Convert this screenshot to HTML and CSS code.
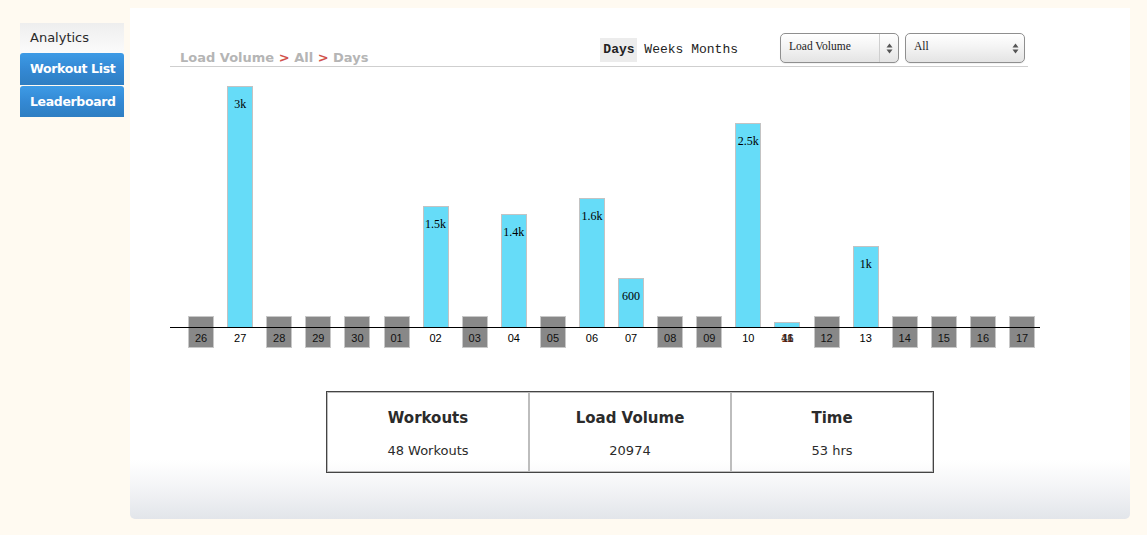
FILE: index.html
```html
<!DOCTYPE html>
<html>
<head>
<meta charset="utf-8">
<link rel="stylesheet" href="styles.css">
</head>
<body>
<div class="page">
  <nav class="sidebar">
    <a class="nav-item nav-active">Analytics</a>
    <a class="nav-item nav-blue">Workout List</a>
    <a class="nav-item nav-blue">Leaderboard</a>
  </nav>
  <main class="panel">
    <div class="header">
      <div class="crumbs">Load Volume <span class="sep">&gt;</span> All <span class="sep">&gt;</span> Days</div>
      <div class="periods"><span class="period period-on">Days</span> <span class="period">Weeks</span> <span class="period">Months</span></div>
      <div class="select select-metric"><span class="select-text">Load Volume</span><span class="select-arrow"><svg width="7" height="11" viewBox="0 0 7 11"><path d="M3.5 0.5 L6.5 4.5 H0.5 Z M3.5 10.5 L6.5 6.5 H0.5 Z" fill="#555"/></svg></span></div>
      <div class="select select-filter"><span class="select-text">All</span><span class="select-arrow"><svg width="7" height="11" viewBox="0 0 7 11"><path d="M3.5 0.5 L6.5 4.5 H0.5 Z M3.5 10.5 L6.5 6.5 H0.5 Z" fill="#555"/></svg></span></div>
    </div>

    <div class="chart">
      <div class="plot">
        <div class="slot"><div class="stub"></div></div>
        <div class="slot"><div class="bar" style="height:241px"><span class="val">3k</span></div></div>
        <div class="slot"><div class="stub"></div></div>
        <div class="slot"><div class="stub"></div></div>
        <div class="slot"><div class="stub"></div></div>
        <div class="slot"><div class="stub"></div></div>
        <div class="slot"><div class="bar" style="height:121px"><span class="val">1.5k</span></div></div>
        <div class="slot"><div class="stub"></div></div>
        <div class="slot"><div class="bar" style="height:113px"><span class="val">1.4k</span></div></div>
        <div class="slot"><div class="stub"></div></div>
        <div class="slot"><div class="bar" style="height:129px"><span class="val">1.6k</span></div></div>
        <div class="slot"><div class="bar" style="height:49px"><span class="val">600</span></div></div>
        <div class="slot"><div class="stub"></div></div>
        <div class="slot"><div class="stub"></div></div>
        <div class="slot"><div class="bar" style="height:204px"><span class="val">2.5k</span></div></div>
        <div class="slot"><div class="bar" style="height:5px"></div></div>
        <div class="slot"><div class="stub"></div></div>
        <div class="slot"><div class="bar" style="height:81px"><span class="val">1k</span></div></div>
        <div class="slot"><div class="stub"></div></div>
        <div class="slot"><div class="stub"></div></div>
        <div class="slot"><div class="stub"></div></div>
        <div class="slot"><div class="stub"></div></div>
      </div>
      <div class="axis"></div>
      <div class="labels">
        <div class="slot"><span class="day day-empty">26</span></div>
        <div class="slot"><span class="day">27</span></div>
        <div class="slot"><span class="day day-empty">28</span></div>
        <div class="slot"><span class="day day-empty">29</span></div>
        <div class="slot"><span class="day day-empty">30</span></div>
        <div class="slot"><span class="day day-empty">01</span></div>
        <div class="slot"><span class="day">02</span></div>
        <div class="slot"><span class="day day-empty">03</span></div>
        <div class="slot"><span class="day">04</span></div>
        <div class="slot"><span class="day day-empty">05</span></div>
        <div class="slot"><span class="day">06</span></div>
        <div class="slot"><span class="day">07</span></div>
        <div class="slot"><span class="day day-empty">08</span></div>
        <div class="slot"><span class="day day-empty">09</span></div>
        <div class="slot"><span class="day">10</span></div>
        <div class="slot"><span class="day day-overlap"><span class="ov-a">11</span><span class="ov-b">46</span></span></div>
        <div class="slot"><span class="day day-empty">12</span></div>
        <div class="slot"><span class="day">13</span></div>
        <div class="slot"><span class="day day-empty">14</span></div>
        <div class="slot"><span class="day day-empty">15</span></div>
        <div class="slot"><span class="day day-empty">16</span></div>
        <div class="slot"><span class="day day-empty">17</span></div>
      </div>
    </div>

    <div class="stats">
      <div class="stat">
        <div class="stat-title">Workouts</div>
        <div class="stat-value">48 Workouts</div>
      </div>
      <div class="stat">
        <div class="stat-title">Load Volume</div>
        <div class="stat-value">20974</div>
      </div>
      <div class="stat">
        <div class="stat-title">Time</div>
        <div class="stat-value">53 hrs</div>
      </div>
    </div>
  </main>
</div>
</body>
</html>
```

FILE: styles.css
```css
html, body {
  margin: 0;
  padding: 0;
  background: #fffaf1;
}

body {
  font-family: "DejaVu Sans", Verdana, sans-serif;
  color: #333;
}

.page {
  display: flex;
  align-items: flex-start;
  padding-left: 20px;
  gap: 6px;
  height: 535px;
}

/* Sidebar */
.sidebar {
  width: 104px;
  margin-top: 23px;
  display: flex;
  flex-direction: column;
}

.nav-item {
  display: block;
  font-size: 13px;
  line-height: 30px;
  padding-left: 10px;
  white-space: nowrap;
  text-decoration: none;
  overflow: hidden;
}

.nav-active {
  height: 30px;
  color: #2a2a2a;
  background: linear-gradient(to bottom, #eeeeee 0%, #f6f6f6 60%, #fbfbfb 100%);
}

.nav-blue {
  height: 32px;
  line-height: 32px;
  color: #fff;
  font-weight: bold;
  font-size: 12.5px;
  letter-spacing: -0.35px;
  border-radius: 3px 3px 0 0;
  background: linear-gradient(to bottom, #3d9be6 0%, #3489d4 50%, #2e7ec2 100%);
}

.nav-blue + .nav-blue {
  margin-top: 1px;
  height: 31px;
  line-height: 31px;
}

/* Panel */
.panel {
  margin-top: 8px;
  width: 1000px;
  height: 511px;
  box-sizing: border-box;
  padding: 25px 40px 0 40px;
  border-radius: 0 0 5px 5px;
  background: linear-gradient(to bottom, #ffffff 0px, #ffffff 452px, #f3f4f6 480px, #e2e5ea 511px);
}

.header {
  width: 858px;
  height: 33px;
  border-bottom: 1px solid #cfcfcf;
  display: flex;
  align-items: flex-start;
  box-sizing: content-box;
}

.crumbs {
  padding-left: 10px;
  margin-top: 16px;
  font-size: 13px;
  font-weight: bold;
  color: #b5b5b5;
  line-height: 18px;
  white-space: nowrap;
}

.sep {
  color: #d2524c;
}

.periods {
  margin-left: auto;
  margin-top: 5px;
  font-family: "Liberation Mono", "Courier New", monospace;
  font-size: 13px;
  color: #222;
  line-height: 24px;
  white-space: nowrap;
}

.period-on {
  display: inline-block;
  background: #ececec;
  font-weight: bold;
  padding: 0 2px 0 3px;
}

.select {
  position: relative;
  height: 30px;
  box-sizing: border-box;
  border: 1px solid #8f8f8f;
  border-radius: 5px;
  background: linear-gradient(to bottom, #ffffff 0%, #f4f4f4 45%, #e4e4e4 100%);
  box-shadow: inset 0 1px 0 #fff, 0 1px 1px rgba(0,0,0,0.06);
  display: flex;
  align-items: flex-start;
  font-family: "Liberation Serif", "Times New Roman", serif;
  font-size: 11.5px;
  color: #222;
}

.select-metric {
  width: 119px;
  margin-left: 42px;
}

.select-filter {
  width: 120px;
  margin-left: 6px;
  margin-right: 3px;
}

.select-text {
  padding-left: 8px;
  line-height: 25px;
  flex: 1;
}

.select-arrow {
  width: 18px;
  height: 28px;
  display: flex;
  align-items: center;
  justify-content: center;
}

.select-metric .select-arrow {
  border-left: 1px solid #cfcfcf;
}

/* Chart */
.chart {
  margin-top: 0;
  padding-left: 11.5px;
  width: 860.2px;
}

.plot, .labels {
  display: flex;
}

.plot {
  height: 260px;
  align-items: flex-end;
}

.slot {
  width: 39.1px;
  flex: 0 0 39.1px;
  display: flex;
  justify-content: center;
  align-items: flex-end;
}

.bar {
  width: 26px;
  box-sizing: border-box;
  background: #66dcf8;
  border: 1px solid #c3c3c3;
  border-bottom: none;
  text-align: center;
}

.val {
  display: block;
  padding-top: 10px;
  font-family: "Liberation Serif", "Times New Roman", serif;
  font-size: 12px;
  line-height: 14px;
  color: #000;
  white-space: nowrap;
  margin: 0 -8px;
}

.stub {
  width: 26px;
  height: 11px;
  box-sizing: border-box;
  background: #888888;
  border: 1px solid #c8c8c8;
  border-bottom: none;
}

.axis {
  margin-left: -11.5px;
  width: 870px;
  height: 1px;
  background: #000;
}

.labels {
  height: 20px;
}

.labels .slot {
  align-items: flex-start;
}

.day {
  display: block;
  width: 26px;
  height: 20px;
  box-sizing: border-box;
  font-family: "Liberation Sans", Arial, sans-serif;
  font-size: 11px;
  line-height: 21px;
  text-align: center;
  color: #000;
}

.day-empty {
  background: #888888;
  border: 1px solid #c8c8c8;
  border-top: none;
  line-height: 20px;
  color: #111;
}

.day-overlap {
  position: relative;
  font-weight: bold;
}

.ov-a, .ov-b {
  position: absolute;
  left: 0;
  right: 0;
  top: 0;
}

.ov-a {
  color: #7a2a10;
}

.ov-b {
  color: #222;
  opacity: 0.8;
}

/* Stats */
.stats {
  margin: 43px auto 0;
  width: 608px;
  height: 82px;
  box-sizing: border-box;
  border: 1px solid #444;
  display: grid;
  grid-template-columns: 1fr 1fr 1fr;
}

.stat {
  border: 1px solid #bdbdbd;
  text-align: center;
  padding-top: 15px;
}

.stat-title {
  font-size: 15px;
  font-weight: bold;
  line-height: 20px;
  color: #2b2b2b;
}

.stat-value {
  margin-top: 14px;
  font-size: 13px;
  line-height: 18px;
  color: #2b2b2b;
}
```
